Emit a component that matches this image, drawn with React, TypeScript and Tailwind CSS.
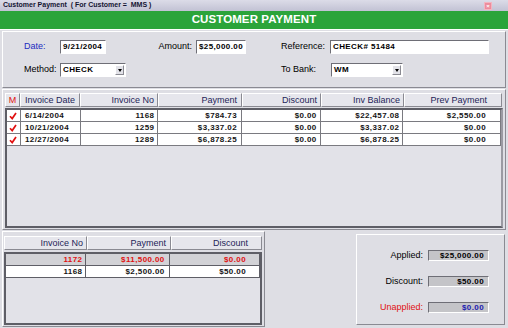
const raised = "border border-t-white border-l-white border-b-[#8a8a92] border-r-[#8a8a92]";
const sunken = "border border-t-[#6e6e76] border-l-[#6e6e76] border-b-white border-r-white";

const topCols = [
  { label: "M", w: "w-[15px]", align: "text-center", red: true },
  { label: "Invoice Date", w: "w-[60px]", align: "text-left pl-[4px]" },
  { label: "Invoice No", w: "w-[78px]", align: "text-right pr-[3px]" },
  { label: "Payment", w: "w-[84px]", align: "text-right pr-[4px]" },
  { label: "Discount", w: "w-[79px]", align: "text-right pr-[3px]" },
  { label: "Inv Balance", w: "w-[83px]", align: "text-right pr-[3px]" },
  { label: "Prev Payment", w: "w-[98px]", align: "text-right pr-[14px]" },
];

const topRows = [
  ["6/14/2004", "1168", "$784.73", "$0.00", "$22,457.08", "$2,550.00"],
  ["10/21/2004", "1259", "$3,337.02", "$0.00", "$3,337.02", "$0.00"],
  ["12/27/2004", "1289", "$6,878.25", "$0.00", "$6,878.25", "$0.00"],
];

const botCols = [
  { label: "Invoice No", w: "w-[83px]", align: "text-right pr-[3px]" },
  { label: "Payment", w: "w-[84px]", align: "text-right pr-[4px]" },
  { label: "Discount", w: "w-[91px]", align: "text-right pr-[13px]" },
];

const botRows = [
  { cells: ["1172", "$11,500.00", "$0.00"], sel: true },
  { cells: ["1168", "$2,500.00", "$50.00"], sel: false },
];

function Check() {
  return (
    <svg width="8" height="8" viewBox="0 0 8 8">
      <path d="M1 4.2 L3.2 6.6 L7 1" fill="none" stroke="#e01010" strokeWidth="1.7" />
    </svg>
  );
}

function TextBox({ value, w }: { value: string; w: string }) {
  return (
    <div className={`${w} h-[14px] bg-white ${sunken} flex items-center px-[2px] text-[8px] font-bold tracking-[0.4px] text-black`}>
      {value}
    </div>
  );
}

function Combo({ value, w }: { value: string; w: string }) {
  return (
    <div className={`${w} h-[14px] bg-white ${sunken} flex items-center pl-[2px] text-[8px] font-bold tracking-[0.4px] text-black`}>
      <span className="flex-1">{value}</span>
      <div className={`w-[9px] h-[10px] mr-[1px] bg-[#e2e2e8] ${raised} flex items-center justify-center`}>
        <div className="w-0 h-0 border-l-[2.5px] border-r-[2.5px] border-t-[3px] border-l-transparent border-r-transparent border-t-black" />
      </div>
    </div>
  );
}

function ValueBox({ value, blue }: { value: string; blue?: boolean }) {
  return (
    <div className={`w-[61px] h-[11px] bg-[#c4c4c8] ${sunken} flex items-center justify-end pr-[4px] text-[8px] font-bold tracking-[0.4px] ${blue ? "text-[#1a1ab0]" : "text-black"}`}>
      {value}
    </div>
  );
}

export default function App() {
  return (
    <div className="w-[508px] h-[328px] overflow-hidden bg-[#dedee4] flex flex-col font-['Liberation_Sans',Arial,sans-serif] text-[9px] text-black">
      {/* title bar */}
      <div className="h-[11px] bg-gradient-to-b from-[#dcdce8] to-[#c2c2d4] flex items-center pl-[3px] pr-[16px]">
        <span className="text-[7px] font-bold text-[#141432] whitespace-pre flex-1">Customer Payment  ( For Customer =  MMS )</span>
        <div className="w-[8px] h-[8px] bg-[#ec8c9c] border border-[#f4b4c0] flex items-center justify-center text-[6px] leading-none text-white font-bold">×</div>
      </div>

      {/* green header */}
      <div className="h-[19px] bg-[#2ba43a] border-b border-white flex items-center justify-center">
        <span className="text-[11.5px] font-bold text-white tracking-[0.1px]">CUSTOMER PAYMENT</span>
      </div>

      {/* form panel */}
      <div className={`mt-[1px] mx-[2px] h-[57px] ${raised} border-t-[#f4f4f8] flex flex-col pt-[8px] gap-[9px]`}>
        <div className="flex items-center h-[14px]">
          <span className="w-[36px] ml-[21px] text-[#1c2cc0]">Date:</span>
          <TextBox value="9/21/2004" w="w-[46px]" />
          <span className="w-[90px] text-right pr-[4px]">Amount:</span>
          <div className={`w-[50px] h-[14px] bg-white ${sunken} flex items-center justify-end pr-[2px] text-[8px] font-bold tracking-[0.4px]`}>$25,000.00</div>
          <span className="w-[84px] text-right pr-[5px]">Reference:</span>
          <TextBox value="CHECK# 51484" w="w-[159px]" />
        </div>
        <div className="flex items-center h-[14px]">
          <span className="w-[36px] ml-[21px]">Method:</span>
          <Combo value="CHECK" w="w-[66px]" />
          <span className="w-[155px]" />
          <span className="w-[50px]">To Bank:</span>
          <Combo value="WM" w="w-[72px]" />
        </div>
      </div>

      {/* invoice grid panel */}
      <div className={`mt-[1px] mx-[2px] h-[141px] ${raised} flex flex-col pt-[3px] pl-[2px]`}>
        <div className="flex h-[14px]">
          {topCols.map((c) => (
            <div key={c.label} className={`${c.w} h-[14px] bg-[#e6e6ec] ${raised} ${c.align} leading-[12px] ${c.red ? "text-[#e01010]" : "text-[#1e1e58]"}`}>
              {c.label}
            </div>
          ))}
        </div>
        <div className="mt-[1px] w-[498px] h-[120px] border-2 border-t-[#5e5e66] border-l-[#5e5e66] border-b-[#5e5e66] border-r-[#9a9aa2] bg-[#e2e2e8]">
          {topRows.map((r, i) => (
            <div key={i} className="flex h-[12px] bg-white">
              <div className="w-[14px] border-r border-b border-[#7a7a80] flex items-center justify-center">
                <Check />
              </div>
              {r.map((v, j) => (
                <div
                  key={j}
                  className={`${topCols[j + 1].w} border-r border-b border-[#7a7a80] ${topCols[j + 1].align} text-[8px] font-bold tracking-[0.4px] leading-[11px] text-[#141414]`}
                >
                  {v}
                </div>
              ))}
            </div>
          ))}
        </div>
      </div>

      {/* bottom area */}
      <div className="flex flex-1 mt-[1px] mx-[2px] mb-[1px] gap-[2px]">
        <div className={`w-[263px] ${raised} pl-[1px] pt-[4px] flex flex-col`}>
          <div className="flex h-[14px]">
            {botCols.map((c) => (
              <div key={c.label} className={`${c.w} h-[14px] bg-[#e6e6ec] ${raised} ${c.align} leading-[12px] text-[#1e1e58]`}>
                {c.label}
              </div>
            ))}
          </div>
          <div className="mt-[2px] w-[258px] flex-1 mb-[1px] border-2 border-[#5e5e66] bg-[#e2e2e8]">
            {botRows.map((r, i) => (
              <div key={i} className={`flex h-[12px] ${r.sel ? "bg-[#d2d2d6]" : "bg-white"}`}>
                {r.cells.map((v, j) => (
                  <div
                    key={j}
                    className={`${j === 0 ? "w-[81px]" : botCols[j].w} border-r border-b border-[#5e5e66] ${botCols[j].align} text-[8px] font-bold tracking-[0.4px] leading-[11px] ${r.sel ? "text-[#e01010]" : "text-[#141414]"}`}
                  >
                    {v}
                  </div>
                ))}
              </div>
            ))}
          </div>
        </div>

        <div className="flex-1" />

        <div className={`w-[149px] mt-[3px] mb-[2px] mr-[1px] ${raised} flex flex-col pt-[15px] gap-[15px]`}>
          {[
            { label: "Applied:", value: "$25,000.00" },
            { label: "Discount:", value: "$50.00" },
            { label: "Unapplied:", value: "$0.00", red: true },
          ].map((r) => (
            <div key={r.label} className="flex items-center h-[11px]">
              <span className={`w-[71px] text-right pr-[5px] ${r.red ? "text-[#e01010]" : "text-black"}`}>{r.label}</span>
              <ValueBox value={r.value} blue={r.red} />
            </div>
          ))}
        </div>
      </div>
    </div>
  );
}
